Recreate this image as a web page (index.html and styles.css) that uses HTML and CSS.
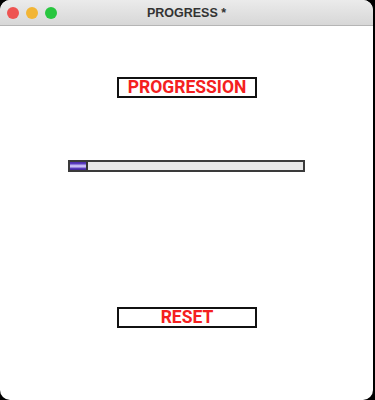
FILE: index.html
```html
<!DOCTYPE html>
<html>
<head>
<meta charset="utf-8">
<link rel="stylesheet" href="styles.css">
</head>
<body>
<div class="window">
  <div class="titlebar">
    <div class="lights">
      <span class="light red"></span>
      <span class="light yellow"></span>
      <span class="light green"></span>
    </div>
    <div class="title">PROGRESS *</div>
  </div>
  <div class="content">
    <div class="btn btn-top">PROGRESSION</div>
    <div class="bar"><div class="fill" style="width:18px"></div></div>
    <div class="btn btn-reset">RESET</div>
  </div>
</div>
</body>
</html>
```
FILE: styles.css
```css
html, body {
  margin: 0;
  padding: 0;
  background: #000;
  width: 375px;
  height: 400px;
  overflow: hidden;
}
.window {
  width: 373px;
  height: 400px;
  background: #fff;
  border-radius: 10px;
  overflow: hidden;
  display: flex;
  flex-direction: column;
}
.titlebar {
  height: 25px;
  background: linear-gradient(#ebebeb, #d7d7d7);
  border-bottom: 1px solid #b5b5b5;
  position: relative;
  display: flex;
  align-items: center;
  justify-content: center;
}
.lights {
  position: absolute;
  left: 7px;
  top: 7px;
  display: flex;
  gap: 7px;
}
.light {
  width: 12px;
  height: 12px;
  border-radius: 50%;
  display: block;
}
.red { background: #ee5351; }
.yellow { background: #f2b534; }
.green { background: #28c63f; }
.title {
  font-family: "Liberation Sans", Arial, sans-serif;
  font-weight: bold;
  font-size: 12.5px;
  color: #333;
  margin-top: 1px;
}
.content {
  display: flex;
  flex-direction: column;
  align-items: center;
  padding-top: 51px;
}
.btn {
  width: 136px;
  height: 17px;
  border: 2px solid #111;
  font-family: Roboto, "Liberation Sans", sans-serif;
  font-weight: bold;
  font-size: 17.5px;
  line-height: 17px;
  color: #f42020;
  text-align: center;
  margin-left: 1px;
}
.bar {
  margin-top: 62px;
  width: 233px;
  height: 8px;
  border: 2px solid #3a3a3a;
  background: #e6e6e6;
  display: flex;
}
.fill {
  height: 8px;
  box-sizing: border-box;
  border-right: 2px solid #333;
  background: linear-gradient(#4a2aa8 0, #5a3cc0 20%, #c8bdf6 45%, #c8bdf6 60%, #5a3cc0 80%, #3c2090 100%);
}
.btn-reset {
  margin-top: 135px;
}
```
